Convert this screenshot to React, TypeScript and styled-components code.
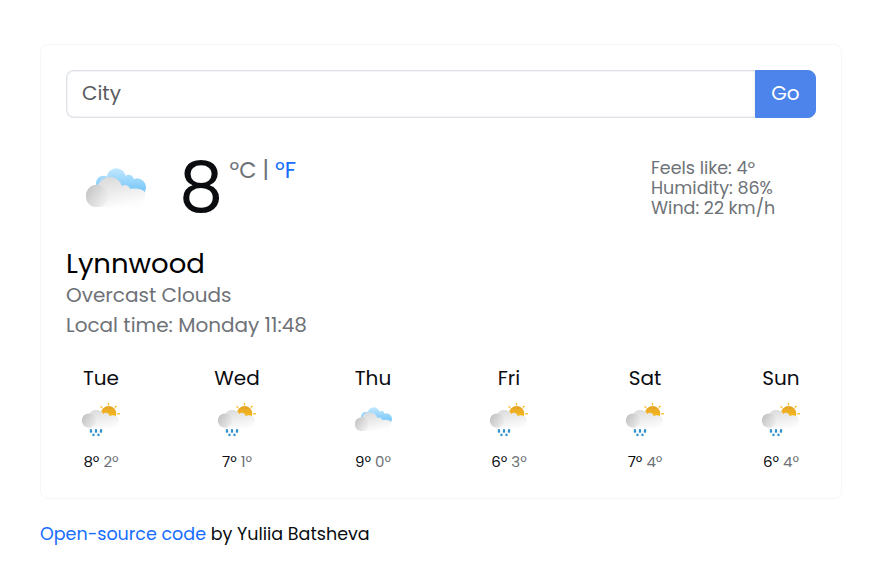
import React from "react";
import styled, { createGlobalStyle } from "styled-components";

const GlobalStyle = createGlobalStyle`
  *, *::before, *::after { box-sizing: border-box; }
  body {
    margin: 0;
    background: #fff;
    color: #0a0c10;
    font-family: Poppins, Inter, sans-serif;
    font-size: 16px;
  }
  a { color: #156dff; text-decoration: none; }
  svg { display: block; }
`;

const Page = styled.div`
  width: 802px;
  margin: 44px 0 0 40px;
`;

const Card = styled.main`
  height: 455px;
  padding: 25px;
  border: 1px solid #f6f6f7;
  border-radius: 8px;
`;

const SearchForm = styled.form`
  display: flex;
  height: 48px;
`;

const SearchInput = styled.input`
  flex: 1;
  min-width: 0;
  padding: 0 15px 2px;
  border: 1px solid #dee2e6;
  border-right: 0;
  border-radius: 8px 0 0 8px;
  background: #fff;
  box-shadow: inset 0 0 0 0.5px #e6e9ee;
  font: 400 20px/30px Poppins, Inter, sans-serif;
  outline: none;
  &::placeholder { color: #595c5f; opacity: 1; }
`;

const SearchButton = styled.button`
  width: 61px;
  padding: 0 0 2px;
  border: 1px solid #4c84eb;
  border-radius: 0 8px 8px 0;
  background: #4c84eb;
  color: #fff;
  font: 400 20px/30px Poppins, Inter, sans-serif;
`;

const Current = styled.section`
  display: flex;
  height: 109px;
  margin-top: 18px;
`;

const CurrentIcon = styled.div`
  width: 60px;
  margin: 32px 0 0 20px;
`;

const Temperature = styled.div`
  margin: 10px 0 0 33px;
  font-size: 70px;
  line-height: 84px;
`;

const Units = styled.div`
  margin: 17px 0 0 6.4px;
  color: #6e7277;
  font-size: 22.4px;
  line-height: 34px;
`;

const Details = styled.ul`
  width: 165px;
  margin: 22px 0 0 auto;
  padding: 0;
  list-style: none;
  color: #6e7277;
  font-size: 17.5px;
  line-height: 20px;
`;

const City = styled.h1`
  margin: 2px 0 0;
  font-size: 27.5px;
  font-weight: 400;
  line-height: 33px;
  color: #000;
`;

const Summary = styled.p`
  margin: 0;
  color: #6e7277;
  font-size: 20px;
  line-height: 30px;
`;

const Forecast = styled.section`
  display: flex;
  justify-content: space-between;
  margin-top: 23px;
`;

const Day = styled.div`
  display: flex;
  flex-direction: column;
  align-items: center;
  width: 70px;
`;

const DayName = styled.div`
  font-size: 20px;
  line-height: 30px;
`;

const DayIcon = styled.div`
  display: flex;
  align-items: flex-end;
  height: 44px;
`;

const DayTemps = styled.div`
  margin-top: 13px;
  font-size: 15px;
  line-height: 24px;
`;

const Low = styled.span`
  color: #6e7277;
`;

const Footer = styled.footer`
  margin-top: 22px;
  font-size: 17.5px;
  line-height: 26px;
`;

const RaisedSvg = styled.svg`
  margin-bottom: 6px;
`;

function CloudsIcon({ width, id, raised }: { width: number; id: string; raised?: boolean }) {
  const Svg = raised ? RaisedSvg : "svg";
  return (
    <Svg width={width} height={(width * 118) / 180} viewBox="30 40 180 118">
      <defs>
        <linearGradient id={`${id}b`} x1="0" y1="40" x2="0" y2="115" gradientUnits="userSpaceOnUse">
          <stop offset="0" stopColor="#c4e8ff" />
          <stop offset="1" stopColor="#70c4f8" />
        </linearGradient>
        <linearGradient id={`${id}f`} x1="95" y1="66" x2="112" y2="158" gradientUnits="userSpaceOnUse">
          <stop offset="0" stopColor="#dadada" />
          <stop offset="1" stopColor="#fdfdfd" />
        </linearGradient>
        <linearGradient id={`${id}c`} x1="36" y1="108" x2="90" y2="144" gradientUnits="userSpaceOnUse">
          <stop offset="0" stopColor="#c8c8c8" />
          <stop offset="1" stopColor="#f0f0f0" />
        </linearGradient>
      </defs>
      <g fill={`url(#${id}b)`}>
        <circle cx="121" cy="70" r="29" />
        <circle cx="82" cy="85" r="22" />
        <circle cx="158" cy="75" r="15" />
        <circle cx="183" cy="98" r="27" />
        <rect x="100" y="75" width="80" height="45" />
      </g>
      <path
        fill={`url(#${id}f)`}
        d="M64 158 V100 A38 38 0 0 1 138 94 A16 16 0 0 1 162 102 Q206 100 207 116 V132 A28 26 0 0 1 180 158 Z"
      />
      <circle cx="63" cy="124" r="34" fill={`url(#${id}c)`} />
    </Svg>
  );
}

function SunRainIcon({ id }: { id: string }) {
  return (
    <svg width="39.3" height="34" viewBox="34 128 118 102">
      <defs>
        <linearGradient id={`${id}s`} x1="0" y1="137" x2="0" y2="175" gradientUnits="userSpaceOnUse">
          <stop offset="0" stopColor="#e3a127" />
          <stop offset="1" stopColor="#fbc21c" />
        </linearGradient>
        <linearGradient id={`${id}f`} x1="78" y1="144" x2="90" y2="202" gradientUnits="userSpaceOnUse">
          <stop offset="0" stopColor="#d9d9d9" />
          <stop offset="1" stopColor="#fafafa" />
        </linearGradient>
        <linearGradient id={`${id}c`} x1="40" y1="171" x2="75" y2="193" gradientUnits="userSpaceOnUse">
          <stop offset="0" stopColor="#c4c4c4" />
          <stop offset="1" stopColor="#ececec" />
        </linearGradient>
      </defs>
      <circle cx="117" cy="160" r="23" fill={`url(#${id}s)`} />
      <path
        stroke="#f8bd2a"
        strokeWidth="4.5"
        strokeLinecap="round"
        d="M116.5 130v3M94 139l2 2M139 138l-2 2M145 160h4"
      />
      <path
        fill={`url(#${id}f)`}
        d="M57 202 V166 A24 24 0 0 1 101 161 A11 11 0 0 1 120 168 A18 18 0 0 1 148 184 A18 18 0 0 1 130 202 Z"
      />
      <circle cx="58" cy="181" r="21.5" fill={`url(#${id}c)`} />
      <path
        stroke="#3594cd"
        strokeWidth="7"
        strokeLinecap="round"
        d="M64 209.5v4.5M79 209.5v4.5M94 209.5v4.5M71.5 223v1.5M86.5 223v1.5"
      />
    </svg>
  );
}

const days = [
  { name: "Tue", high: 8, low: 2, rain: true },
  { name: "Wed", high: 7, low: 1, rain: true },
  { name: "Thu", high: 9, low: 0, rain: false },
  { name: "Fri", high: 6, low: 3, rain: true },
  { name: "Sat", high: 7, low: 4, rain: true },
  { name: "Sun", high: 6, low: 4, rain: true },
];

export default function App() {
  return (
    <>
      <GlobalStyle />
      <Page>
        <Card>
          <SearchForm onSubmit={(e) => e.preventDefault()}>
            <SearchInput placeholder="City" />
            <SearchButton type="submit">Go</SearchButton>
          </SearchForm>
          <Current>
            <CurrentIcon>
              <CloudsIcon width={60} id="now" />
            </CurrentIcon>
            <Temperature>8</Temperature>
            <Units>
              ºC | <a href="#f">ºF</a>
            </Units>
            <Details>
              <li>Feels like: 4º</li>
              <li>Humidity: 86%</li>
              <li>Wind: 22 km/h</li>
            </Details>
          </Current>
          <City>Lynnwood</City>
          <Summary>Overcast Clouds</Summary>
          <Summary>Local time: Monday 11:48</Summary>
          <Forecast>
            {days.map((d) => (
              <Day key={d.name}>
                <DayName>{d.name}</DayName>
                <DayIcon>
                  {d.rain ? <SunRainIcon id={d.name} /> : <CloudsIcon width={37} id={d.name} raised />}
                </DayIcon>
                <DayTemps>
                  {d.high}º <Low>{d.low}º</Low>
                </DayTemps>
              </Day>
            ))}
          </Forecast>
        </Card>
        <Footer>
          <a href="#source">Open-source code</a> by Yuliia Batsheva
        </Footer>
      </Page>
    </>
  );
}
